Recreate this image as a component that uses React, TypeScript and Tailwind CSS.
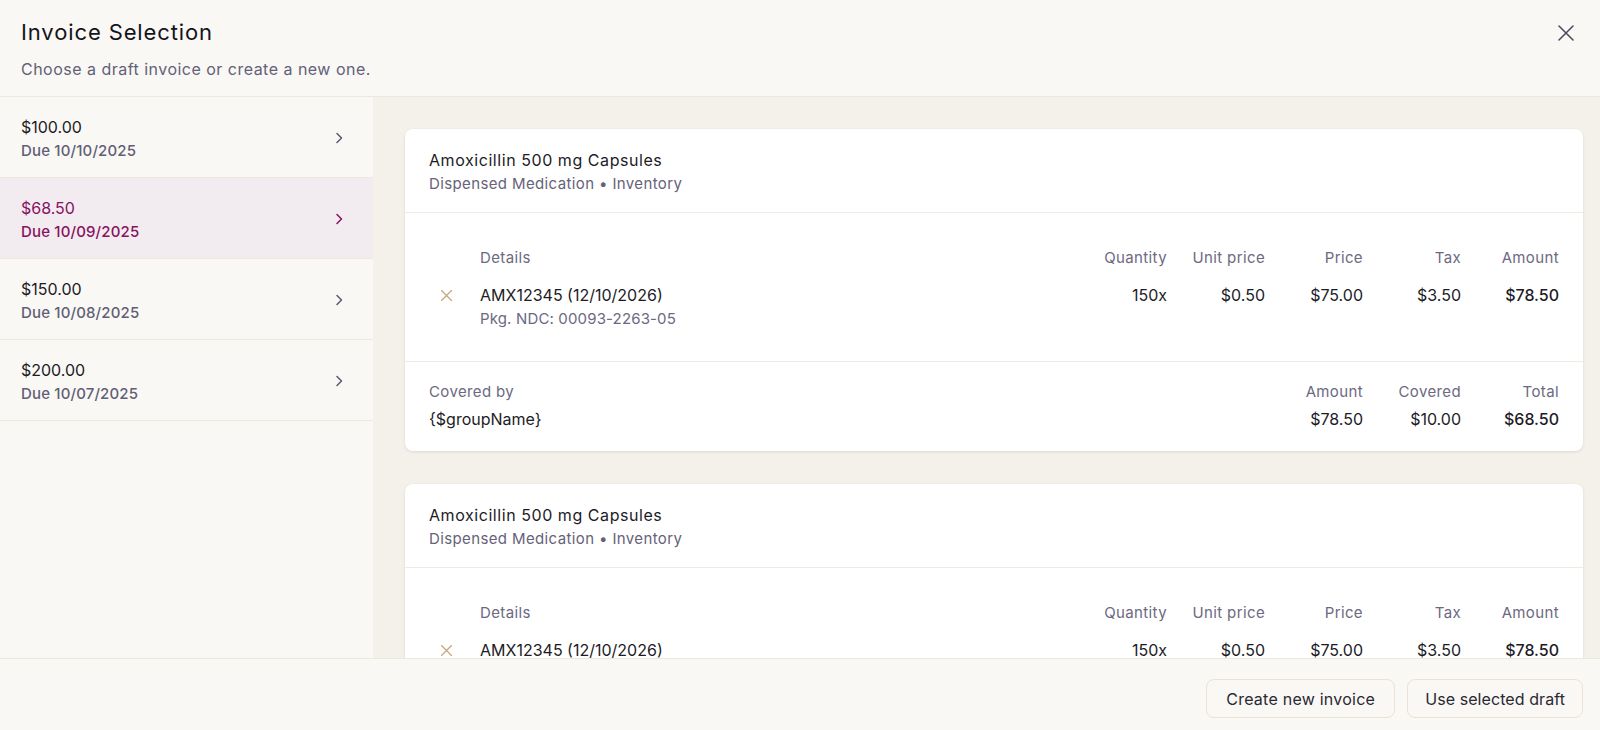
import React from "react";

interface Draft {
  id: string;
  amount: string;
  due: string;
}

const drafts: Draft[] = [
  { id: "d1", amount: "$100.00", due: "10/10/2025" },
  { id: "d2", amount: "$68.50", due: "10/09/2025" },
  { id: "d3", amount: "$150.00", due: "10/08/2025" },
  { id: "d4", amount: "$200.00", due: "10/07/2025" },
];

const cols = ["Quantity", "Unit price", "Price", "Tax", "Amount"];

function CloseIcon() {
  return (
    <svg width="16" height="16" viewBox="0 0 16 16" fill="none" stroke="#4a4760" strokeWidth="1.5" strokeLinecap="round">
      <path d="M1 1l14 14M15 1L1 15" />
    </svg>
  );
}

function Chevron({ color }: { color: string }) {
  return (
    <svg width="8" height="12" viewBox="0 0 8 12" fill="none" stroke={color} strokeWidth="1.5" strokeLinecap="round" strokeLinejoin="round">
      <path d="M2 1.5L6.5 6 2 10.5" />
    </svg>
  );
}

function SmallX() {
  return (
    <svg width="11" height="11" viewBox="0 0 11 11" fill="none" stroke="#c7a47c" strokeWidth="1.2" strokeLinecap="round">
      <path d="M0.5 0.5l10 10M10.5 0.5l-10 10" />
    </svg>
  );
}

function InvoiceCard() {
  return (
    <div className="bg-white rounded-lg shadow-[0_1px_3px_rgba(60,50,30,0.12)] shrink-0">
      {/* Item header */}
      <div className="px-6 pt-5 pb-[17px] border-b border-[#efebe3]">
        <p className="text-[16px] leading-[22px] tracking-[0.035em] text-[#1d1b26]">Amoxicillin 500 mg Capsules</p>
        <p className="text-[15px] leading-[22px] mt-[2px] tracking-[0.025em] text-[#666279]">Dispensed Medication • Inventory</p>
      </div>

      {/* Line items */}
      <div className="px-6 pt-[34px] pb-[31px] border-b border-[#efebe3]">
        <div className="flex text-[15px] leading-[22px] tracking-[0.025em] text-[#6c6981]">
          <div className="w-[51px]" />
          <div className="flex-1">Details</div>
          {cols.map((c) => (
            <div key={c} className="w-[98px] text-right">{c}</div>
          ))}
        </div>
        <div className="flex mt-[15px] text-[16px] leading-[22px] text-[#1d1b26]">
          <div className="w-[51px] pl-3 pt-[6px]">
            <SmallX />
          </div>
          <div className="flex-1">
            <p>AMX12345 (12/10/2026)</p>
            <p className="text-[15px] text-[#6c6981] mt-[2px] tracking-[0.01em]">Pkg. NDC: 00093-2263-05</p>
          </div>
          <div className="w-[98px] text-right">150x</div>
          <div className="w-[98px] text-right">$0.50</div>
          <div className="w-[98px] text-right">$75.00</div>
          <div className="w-[98px] text-right">$3.50</div>
          <div className="w-[98px] text-right font-medium">$78.50</div>
        </div>
      </div>

      {/* Coverage */}
      <div className="px-6 pt-[18px] pb-[20px] flex">
        <div className="flex-1">
          <p className="text-[15px] leading-[24px] tracking-[0.025em] text-[#6c6981]">Covered by</p>
          <p className="text-[16px] leading-[24px] mt-[3px] text-[#1d1b26]">{"{$groupName}"}</p>
        </div>
        {[
          ["Amount", "$78.50", false],
          ["Covered", "$10.00", false],
          ["Total", "$68.50", true],
        ].map(([label, value, strong]) => (
          <div key={label as string} className="w-[98px] text-right">
            <p className="text-[15px] leading-[24px] tracking-[0.025em] text-[#6c6981]">{label}</p>
            <p className={`text-[16px] leading-[24px] mt-[3px] text-[#1d1b26] ${strong ? "font-medium" : ""}`}>{value}</p>
          </div>
        ))}
      </div>
    </div>
  );
}

export default function App() {
  const selected = "d2";

  return (
    <div
      className="h-[730px] w-[1600px] flex flex-col overflow-hidden bg-[#f9f8f4] text-[#1d1b26]"
      style={{ fontFamily: "Inter, 'Noto Sans', sans-serif" }}
    >
      {/* ── Header ─────────────────────────────────────────── */}
      <div className="h-[97px] shrink-0 flex justify-between border-b border-[#ece8df] pl-[21px] pr-[26px]">
        <div className="pt-[19px]">
          <h1 className="text-[22px] leading-[26px] tracking-[0.04em] text-[#14131a]">Invoice Selection</h1>
          <p className="text-[16px] leading-[24px] mt-3 tracking-[0.03em] text-[#636078]">Choose a draft invoice or create a new one.</p>
        </div>
        <button className="mt-[25px] h-4">
          <CloseIcon />
        </button>
      </div>

      {/* ── Body ───────────────────────────────────────────── */}
      <div className="flex flex-1 min-h-0">
        <div className="w-[373px] shrink-0 bg-[#f9f8f4]">
          {drafts.map((d) => {
            const active = d.id === selected;
            return (
              <div
                key={d.id}
                className={`h-[81px] flex items-start justify-between pt-[18px] pl-[21px] pr-[30px] border-b border-[#ece8df] ${active ? "bg-[#f2ebf0]" : ""}`}
              >
                <div>
                  <p className={`text-[16px] leading-[24px] ${active ? "text-[#87125e]" : "text-[#1d1b26]"}`}>{d.amount}</p>
                  <p className={`text-[15px] leading-[22px] mt-px font-medium tracking-[0.01em] ${active ? "text-[#87125e]" : "text-[#625e76]"}`}>
                    Due {d.due}
                  </p>
                </div>
                <div className="pt-[17px]">
                  <Chevron color={active ? "#87125e" : "#5b5870"} />
                </div>
              </div>
            );
          })}
        </div>

        <div className="flex-1 min-w-0 bg-[#f3f1ea] pl-8 pr-[17px] pt-8 flex flex-col gap-[33px] overflow-hidden">
          <InvoiceCard />
          <InvoiceCard />
        </div>
      </div>

      {/* ── Footer ─────────────────────────────────────────── */}
      <div className="h-[72px] shrink-0 border-t border-[#ece8df] flex justify-end items-start gap-3 pt-5 pr-[17px]">
        <button className="h-[39px] px-[19px] rounded-lg border border-[#ece2d3] text-[16px] tracking-[0.015em] text-[#2a2833]">
          Create new invoice
        </button>
        <button className="h-[39px] px-[17px] rounded-lg border border-[#ece2d3] text-[16px] tracking-[0.005em] text-[#2a2833]">
          Use selected draft
        </button>
      </div>
    </div>
  );
}
